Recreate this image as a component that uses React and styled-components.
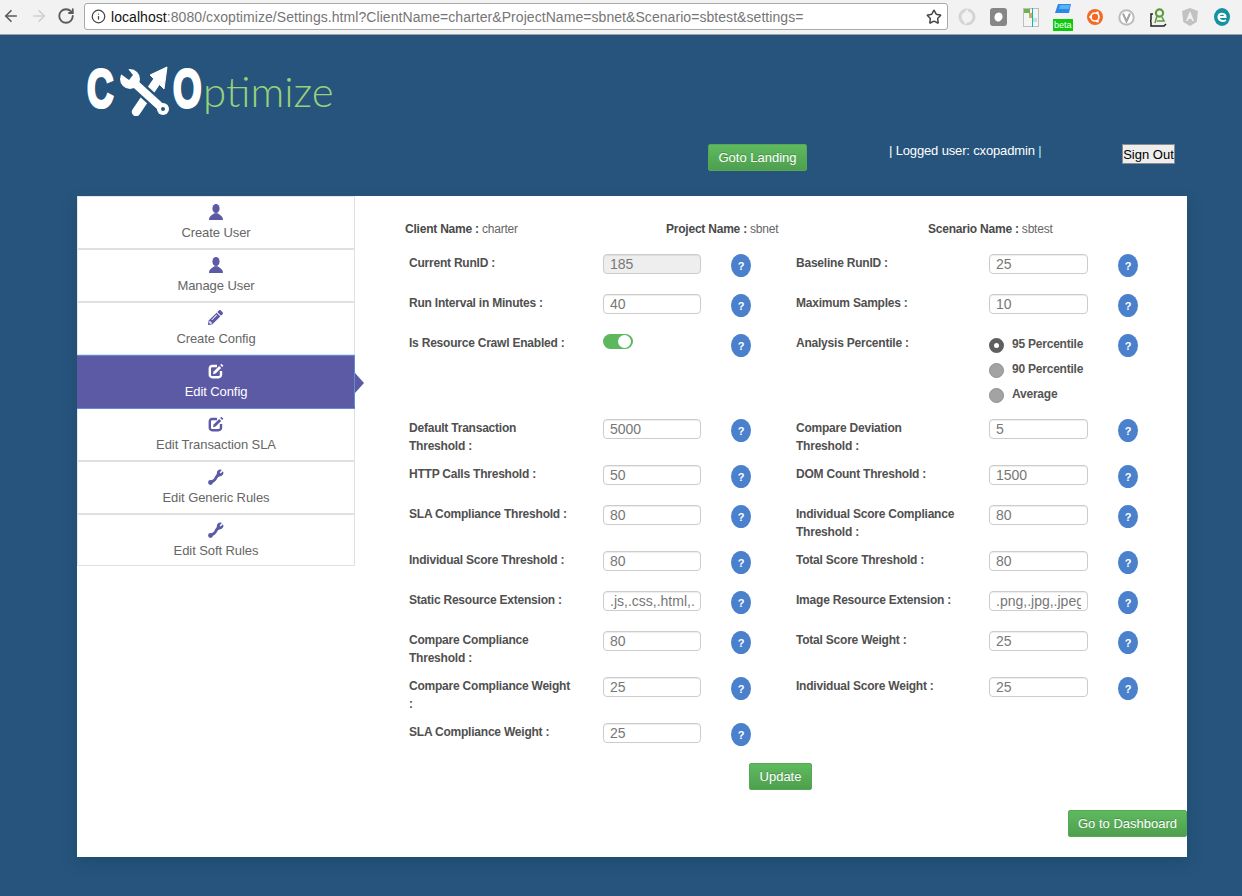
import React from "react";
import styled, { createGlobalStyle } from "styled-components";
import { ArrowLeft, ArrowRight, RotateCw, Info, Star } from "lucide-react";
import { FaPencilAlt } from "react-icons/fa";

const Global = createGlobalStyle`
  html, body { margin: 0; padding: 0; background: #26547c; }
  body { font-family: "Liberation Sans", Arial, sans-serif; }
  * { box-sizing: border-box; }
`;

const Page = styled.div`
  width: 1242px;
  height: 896px;
  background: #26547c;
  overflow: hidden;
`;

/* browser chrome */
const BrowserBar = styled.div`
  height: 35px;
  background: #f2f2f2;
  border-bottom: 1px solid #a0a0a0;
  display: flex;
  align-items: flex-start;
`;
const NavButtons = styled.div`
  width: 84px;
  flex: none;
  height: 34px;
  padding: 7px 0 0 2px;
  display: flex;
  gap: 9.5px;
  color: #5a5a5a;
`;
const AddressBox = styled.div`
  width: 864px;
  flex: none;
  height: 27px;
  margin-top: 3px;
  background: #fff;
  border: 1px solid #a9a9a9;
  border-radius: 3px;
  display: flex;
  align-items: center;
  padding: 0 5px 0 6px;
  color: #444;
`;
const Url = styled.div`
  flex: 1;
  margin-left: 5px;
  font-size: 14px;
  letter-spacing: 0.06px;
  color: #767676;
  white-space: nowrap;
`;
const UrlHost = styled.span`
  color: #111;
`;
const Extensions = styled.div`
  flex: 1;
  height: 34px;
  display: flex;
  padding-left: 3px;
`;
const ExtSlot = styled.div`
  width: 31.9px;
  height: 28px;
  margin-top: 3px;
  position: relative;
  display: flex;
  align-items: center;
  justify-content: center;
`;
const BetaBadge = styled.span`
  position: absolute;
  left: 6px;
  top: 16px;
  width: 20px;
  height: 12px;
  background: #0ccb0c;
  color: #fff;
  font-size: 9px;
  line-height: 12px;
  text-align: center;
`;

/* header */
const Header = styled.header`
  height: 161px;
  padding-left: 87px;
`;
const Logo = styled.div`
  height: 109px;
  padding-top: 28px;
  display: flex;
  align-items: flex-start;
`;
const LogoLetter = styled.span`
  display: block;
  width: 27px;
  height: 50px;
  font-weight: 700;
  font-size: 54px;
  line-height: 50px;
  color: #fff;
  -webkit-text-stroke: 3px #fff;
  transform: scaleX(0.68);
  transform-origin: left top;
`;
const LogoMark = styled.svg`
  display: block;
  width: 52px;
  height: 50px;
  margin: 3px 3px 0 4px;
`;
const LogoRest = styled.span`
  display: block;
  font-family: Lato, sans-serif;
  font-weight: 300;
  font-size: 42px;
  line-height: 50px;
  color: #98d17a;
  margin: 3px 0 0 3px;
`;
const HeaderActions = styled.div`
  display: flex;
  align-items: flex-start;
  padding-left: 621px;
`;
const GreenButton = styled.button`
  display: block;
  height: 27px;
  width: ${(p) => p.$w}px;
  padding: 0;
  font-family: "Liberation Sans", Arial, sans-serif;
  font-size: 13px;
  color: #fff;
  text-shadow: 0 -1px 0 rgba(0, 0, 0, 0.2);
  background: linear-gradient(to bottom, #5fba5f 0%, #4e9f4e 100%);
  border: 1px solid #55a855;
  border-radius: 2px;
`;
const LoggedUser = styled.div`
  margin-left: 82px;
  width: 233px;
  font-size: 13px;
  letter-spacing: -0.15px;
  line-height: 16px;
  color: #fff;
  margin-top: -1px;
`;
const Pipe = styled.span`
  color: #a6ecff;
`;
const SignOut = styled.button`
  display: block;
  width: 53px;
  height: 20px;
  padding: 0;
  font-family: "Liberation Sans", Arial, sans-serif;
  font-size: 13px;
  white-space: nowrap;
  color: #000;
  background: #eeeeee;
  border: 1px solid #8c8c8c;
`;

/* main card */
const Card = styled.main`
  width: 1110px;
  height: 661px;
  margin-left: 77px;
  background: #fff;
  display: flex;
  box-shadow: 0 6px 14px rgba(20, 50, 80, 0.25);
`;
const Sidebar = styled.nav`
  width: 278px;
  flex: none;
  display: flex;
  flex-direction: column;
  padding-top: 1px;
`;
const NavItem = styled.a`
  position: relative;
  height: ${(p) => (p.$last ? 51 : 53)}px;
  display: flex;
  flex-direction: column;
  align-items: center;
  padding-top: 7px;
  background: ${(p) => (p.$active ? "#5c59a5" : "#fff")};
  border-left: 1px solid ${(p) => (p.$active ? "#5c59a5" : "#e6e6e6")};
  border-right: 1px solid ${(p) => (p.$active ? "#5a8fd0" : "#e0e0e0")};
  border-bottom: ${(p) => (p.$last ? 1 : 2)}px solid ${(p) => (p.$active ? "#5c59a5" : "#e0e0e0")};
  border-top: ${(p) => (p.$active ? "1px solid #5a8fd0" : "none")};
  margin-top: ${(p) => (p.$active ? "-1px" : "0")};
  margin-bottom: ${(p) => (p.$active ? "1px" : "0")};
  box-shadow: ${(p) => (p.$active ? "0 1px 0 #5a8fd0" : p.$first ? "0 -1px 0 #e6e6e6" : "none")};
  color: ${(p) => (p.$active ? "#fff" : "#5c59a5")};
  &::after {
    content: "";
    display: ${(p) => (p.$active ? "block" : "none")};
    position: absolute;
    right: -10px;
    top: 17px;
    border-left: 9px solid #5c59a5;
    border-top: 10px solid transparent;
    border-bottom: 10px solid transparent;
  }
`;
const NavIcon = styled.span`
  display: block;
  height: 16px;
  width: 16px;
  line-height: 0;
`;
const NavLabel = styled.span`
  display: block;
  margin-top: 5px;
  font-size: 13px;
  letter-spacing: -0.08px;
  line-height: 16px;
  color: ${(p) => (p.$active ? "#fff" : "#666")};
`;

const Content = styled.section`
  flex: 1;
  padding: 24px 0 0 54px;
  display: flex;
  flex-direction: column;
`;
const InfoRow = styled.div`
  display: flex;
  margin: 0 0 16px -4px;
  height: 18px;
  font-size: 12px;
  letter-spacing: -0.22px;
  line-height: 18px;
  color: #666;
`;
const InfoCell = styled.div`
  width: ${(p) => p.$w}px;
`;
const InfoKey = styled.b`
  color: #4a4a4a;
`;
const Row = styled.div`
  display: grid;
  grid-template-columns: 387px 1fr;
  min-height: 40px;
`;
const Field = styled.div`
  display: flex;
  align-items: flex-start;
`;
const Label = styled.label`
  display: block;
  width: ${(p) => (p.$right ? 193 : 194)}px;
  padding-right: ${(p) => (p.$right ? 30 : 31)}px;
  margin-bottom: 10px;
  font-size: 12px;
  letter-spacing: -0.22px;
  font-weight: 700;
  line-height: 18px;
  color: #505050;
`;
const ControlCell = styled.div`
  width: ${(p) => (p.$right ? 99 : 98)}px;
  margin-right: 30px;
  flex: none;
`;
const TextInput = styled.input`
  display: block;
  width: 100%;
  height: 20px;
  padding: 0 6px;
  font-family: "Liberation Sans", Arial, sans-serif;
  font-size: 14px;
  color: #777;
  background: ${(p) => (p.disabled ? "#eeeeee" : "#fff")};
  border: 1px solid #ccc;
  border-radius: 4px;
  box-shadow: inset 0 1px 1px rgba(0, 0, 0, 0.075);
  outline: none;
`;
const Help = styled.span`
  display: block;
  flex: none;
  width: 20px;
  height: 23px;
  border-radius: 50%;
  background: #4a80cc;
  color: #fff;
  text-align: center;
  font-size: 11px;
  font-weight: 700;
  line-height: 24px;
`;
const Toggle = styled.span`
  display: block;
  position: relative;
  width: 30px;
  height: 15px;
  border-radius: 8px;
  background: #5cb85c;
  &::after {
    content: "";
    position: absolute;
    right: 2px;
    top: 1px;
    width: 13px;
    height: 13px;
    border-radius: 50%;
    background: #fff;
  }
`;
const RadioGroup = styled.div`
  padding-top: 3px;
  padding-bottom: 7px;
`;
const RadioRow = styled.div`
  display: flex;
  align-items: center;
  height: 25px;
  padding-bottom: 8px;
  font-size: 12px;
  letter-spacing: -0.22px;
  font-weight: 700;
  color: #555;
  white-space: nowrap;
`;
const RadioDot = styled.span`
  display: block;
  flex: none;
  width: 15px;
  height: 15px;
  margin-right: 8px;
  border-radius: 50%;
  background: ${(p) => (p.$on ? "#fff" : "#a3a3a3")};
  border: ${(p) => (p.$on ? "5px solid #5f5f5f" : "1px solid #8f8f8f")};
`;
const RadioText = styled.span`
  display: block;
  margin-top: -3px;
`;
const UpdateWrap = styled.div`
  padding-left: 340px;
`;
const DashboardWrap = styled.div`
  display: flex;
  justify-content: flex-end;
  margin-top: 20px;
`;

const Mark = () => (
  <LogoMark viewBox="0 0 52 50">
    <path d="M18 46 L41 12" stroke="#fff" strokeWidth="8.5" strokeLinecap="round" />
    <path d="M49 1 L32 9 L46 23 Z" fill="#fff" stroke="#fff" strokeWidth="1" />
    <path d="M13 14 L45 43" stroke="#26547c" strokeWidth="13" />
    <path d="M13 14 L45 43" stroke="#fff" strokeWidth="8" strokeLinecap="round" />
    <circle cx="12" cy="13" r="10" fill="#fff" />
    <path d="M7 -1 L15 9 L11 14 L0 6 L0 -1 Z" fill="#26547c" />
    <circle cx="45" cy="43" r="6" fill="#fff" />
    <circle cx="45" cy="43" r="2" fill="#26547c" />
  </LogoMark>
);

const UserIcon = () => (
  <svg width="16" height="16" viewBox="0 0 16 16" fill="currentColor">
    <ellipse cx="8" cy="4.6" rx="3.6" ry="4.6" />
    <path d="M1 16 C1 11.5 4.6 11.2 6 9.2 H10 C11.4 11.2 15 11.5 15 16 Z" />
  </svg>
);
const EditIcon = () => (
  <svg width="16" height="16" viewBox="0 0 16 16" fill="currentColor">
    <path d="M9 3H4.2A2.4 2.4 0 0 0 1.8 5.4v6.4a2.4 2.4 0 0 0 2.4 2.4h6.4a2.4 2.4 0 0 0 2.4-2.4V8" fill="none" stroke="currentColor" strokeWidth="2.4" />
    <path d="M5.6 8.6 L11.2 3 L13.2 5 L7.6 10.6 L5 11.2 Z" />
    <path d="M12.2 2 L13.4 0.8 L15.4 2.8 L14.2 4 Z" />
  </svg>
);
const WrenchIcon = () => (
  <svg width="16" height="16" viewBox="0 0 16 16" fill="currentColor">
    <path d="M2.5 13.5 L6 11.5 C8 10 8 8 9.5 6.5" fill="none" stroke="currentColor" strokeWidth="2.8" strokeLinecap="round" />
    <path d="M15 2.2 L12.6 4.4 L11.6 3.4 L13.8 1 C11.8 0 9.6 1 9 3 C8.6 4.6 9 6 8.5 7.5 L10.2 8 C11.6 7.2 13.4 7.4 14.6 6 C15.6 4.8 15.6 3.4 15 2.2 Z" />
    <circle cx="2.5" cy="13.5" r="2.4" />
  </svg>
);

const Swirl = () => (
  <svg width="18" height="18" viewBox="0 0 18 18">
    <circle cx="9" cy="9" r="7" fill="none" stroke="#d4d4d4" strokeWidth="3" />
    <path d="M10 2 C6 5 6 12 8 16" fill="none" stroke="#f2f2f2" strokeWidth="2" />
  </svg>
);
const GreyBox = () => (
  <svg width="17" height="18" viewBox="0 0 17 18">
    <rect width="17" height="18" rx="3" fill="#868686" />
    <ellipse cx="8.5" cy="9" rx="4" ry="4.6" fill="#fff" transform="rotate(20 8.5 9)" />
  </svg>
);
const Chart = () => (
  <svg width="16" height="19" viewBox="0 0 16 19">
    <rect x="0.5" y="0.5" width="15" height="18" fill="#f4f4f4" stroke="#bdbdbd" />
    <rect x="1" y="1" width="6" height="4" fill="#6fb04f" />
    <rect x="6" y="5" width="4" height="5" fill="#c4b25a" />
    <rect x="10" y="10" width="4" height="4" fill="#bfe3cf" />
    <rect x="9" y="0" width="1" height="19" fill="#17b3b8" />
  </svg>
);
const BlueFlag = () => (
  <svg width="16" height="12" viewBox="0 0 16 12" style={{ marginTop: -14 }}>
    <path d="M3 0 H16 L14 9 H0 Z" fill="#2a88e8" />
    <path d="M5 1 H15 L14 5 H4 Z" fill="#5cb0f4" />
  </svg>
);
const Lifebuoy = () => (
  <svg width="16" height="16" viewBox="0 0 16 16">
    <circle cx="8" cy="8" r="8" fill="#f26a26" />
    <circle cx="8" cy="8" r="4" fill="none" stroke="#fff" strokeWidth="1.6" />
    <circle cx="3.5" cy="8" r="1.3" fill="#fff" />
    <circle cx="10.5" cy="3.8" r="1.3" fill="#fff" />
    <circle cx="10.5" cy="12.2" r="1.3" fill="#fff" />
  </svg>
);
const VCircle = () => (
  <svg width="17" height="17" viewBox="0 0 17 17">
    <circle cx="8.5" cy="8.5" r="7.2" fill="#fff" stroke="#bcbcbc" strokeWidth="2" />
    <path d="M5 4.5 L8.5 12.5 L12 4.5" fill="none" stroke="#a5a5a5" strokeWidth="2" />
  </svg>
);
const Bracket = () => (
  <svg width="17" height="19" viewBox="0 0 17 19">
    <circle cx="9.5" cy="5" r="3.6" fill="none" stroke="#5f9a3c" strokeWidth="2.2" />
    <path d="M7 8 L5 15 M12 9 L14 13 H7" fill="none" stroke="#5f9a3c" strokeWidth="1.6" />
    <path d="M3 6 H1 V12 L0 13 L1 14 V18 H14 L16 16" fill="none" stroke="#222" strokeWidth="1.5" />
  </svg>
);
const Shield = () => (
  <svg width="16" height="18" viewBox="0 0 16 18">
    <path d="M8 0 L16 3 L14.7 14 L8 18 L1.3 14 L0 3 Z" fill="#c2c2c2" />
    <path d="M8 3 L4 13 H5.8 L6.6 11 H9.4 L10.2 13 H12 Z" fill="#f0f0f0" />
  </svg>
);
const TealCircle = () => (
  <svg width="16" height="18" viewBox="0 0 16 18">
    <ellipse cx="8" cy="9" rx="8" ry="9" fill="#12939f" />
    <path d="M4 9 H11.5 C11.5 5 5.5 4.5 4.6 8 C3.8 12 8 14.5 12 12" fill="none" stroke="#fff" strokeWidth="2" />
  </svg>
);

const nav = [
  { label: "Create User", icon: <UserIcon />, first: true },
  { label: "Manage User", icon: <UserIcon /> },
  { label: "Create Config", icon: <FaPencilAlt size={15} /> },
  { label: "Edit Config", icon: <EditIcon />, active: true },
  { label: "Edit Transaction SLA", icon: <EditIcon /> },
  { label: "Edit Generic Rules", icon: <WrenchIcon /> },
  { label: "Edit Soft Rules", icon: <WrenchIcon />, last: true },
];

const Text = ({ label, value, disabled, right }) => (
  <Field>
    <Label $right={right}>{label}</Label>
    <ControlCell $right={right}>
      <TextInput defaultValue={value} disabled={disabled} />
    </ControlCell>
    <Help>?</Help>
  </Field>
);

const rows = [
  [{ label: "Default Transaction Threshold :", value: "5000" }, { label: "Compare Deviation Threshold :", value: "5" }],
  [{ label: "HTTP Calls Threshold :", value: "50" }, { label: "DOM Count Threshold :", value: "1500" }],
  [{ label: "SLA Compliance Threshold :", value: "80" }, { label: "Individual Score Compliance Threshold :", value: "80" }],
  [{ label: "Individual Score Threshold :", value: "80" }, { label: "Total Score Threshold :", value: "80" }],
  [{ label: "Static Resource Extension :", value: ".js,.css,.html,.htm" }, { label: "Image Resource Extension :", value: ".png,.jpg,.jpeg,.gif" }],
  [{ label: "Compare Compliance Threshold :", value: "80" }, { label: "Total Score Weight :", value: "25" }],
  [{ label: "Compare Compliance Weight :", value: "25" }, { label: "Individual Score Weight :", value: "25" }],
  [{ label: "SLA Compliance Weight :", value: "25" }],
];

export default function App() {
  return (
    <Page>
      <Global />
      <BrowserBar>
        <NavButtons>
          <ArrowLeft size={18} strokeWidth={2.2} />
          <ArrowRight size={18} strokeWidth={2.2} color="#cfcfcf" />
          <RotateCw size={18} strokeWidth={2.4} />
        </NavButtons>
        <AddressBox>
          <Info size={15} strokeWidth={2} />
          <Url>
            <UrlHost>localhost</UrlHost>:8080/cxoptimize/Settings.html?ClientName=charter&amp;ProjectName=sbnet&amp;Scenario=sbtest&amp;settings=
          </Url>
          <Star size={16} strokeWidth={2.2} color="#444" />
        </AddressBox>
        <Extensions>
          <ExtSlot><Swirl /></ExtSlot>
          <ExtSlot><GreyBox /></ExtSlot>
          <ExtSlot><Chart /></ExtSlot>
          <ExtSlot><BlueFlag /><BetaBadge>beta</BetaBadge></ExtSlot>
          <ExtSlot><Lifebuoy /></ExtSlot>
          <ExtSlot><VCircle /></ExtSlot>
          <ExtSlot><Bracket /></ExtSlot>
          <ExtSlot><Shield /></ExtSlot>
          <ExtSlot><TealCircle /></ExtSlot>
        </Extensions>
      </BrowserBar>

      <Header>
        <Logo>
          <LogoLetter>C</LogoLetter>
          <Mark />
          <LogoLetter>O</LogoLetter>
          <LogoRest>ptimize</LogoRest>
        </Logo>
        <HeaderActions>
          <GreenButton $w={99}>Goto Landing</GreenButton>
          <LoggedUser>| Logged user: cxopadmin <Pipe>|</Pipe></LoggedUser>
          <SignOut>Sign Out</SignOut>
        </HeaderActions>
      </Header>

      <Card>
        <Sidebar>
          {nav.map((n) => (
            <NavItem key={n.label} $active={n.active} $last={n.last} $first={n.first}>
              <NavIcon>{n.icon}</NavIcon>
              <NavLabel $active={n.active}>{n.label}</NavLabel>
            </NavItem>
          ))}
        </Sidebar>
        <Content>
          <InfoRow>
            <InfoCell $w={261}><InfoKey>Client Name :</InfoKey> charter</InfoCell>
            <InfoCell $w={262}><InfoKey>Project Name :</InfoKey> sbnet</InfoCell>
            <InfoCell $w={200}><InfoKey>Scenario Name :</InfoKey> sbtest</InfoCell>
          </InfoRow>
          <Row>
            <Text label="Current RunID :" value="185" disabled />
            <Text label="Baseline RunID :" value="25" right />
          </Row>
          <Row>
            <Text label="Run Interval in Minutes :" value="40" />
            <Text label="Maximum Samples :" value="10" right />
          </Row>
          <Row>
            <Field>
              <Label>Is Resource Crawl Enabled :</Label>
              <ControlCell><Toggle /></ControlCell>
              <Help>?</Help>
            </Field>
            <Field>
              <Label $right>Analysis Percentile :</Label>
              <ControlCell $right>
                <RadioGroup>
                  <RadioRow><RadioDot $on /><RadioText>95 Percentile</RadioText></RadioRow>
                  <RadioRow><RadioDot /><RadioText>90 Percentile</RadioText></RadioRow>
                  <RadioRow><RadioDot /><RadioText>Average</RadioText></RadioRow>
                </RadioGroup>
              </ControlCell>
              <Help>?</Help>
            </Field>
          </Row>
          {rows.map((r) => (
            <Row key={r[0].label}>
              <Text {...r[0]} />
              {r[1] && <Text {...r[1]} right />}
            </Row>
          ))}
          <UpdateWrap><GreenButton $w={63}>Update</GreenButton></UpdateWrap>
          <DashboardWrap><GreenButton $w={119}>Go to Dashboard</GreenButton></DashboardWrap>
        </Content>
      </Card>
    </Page>
  );
}
